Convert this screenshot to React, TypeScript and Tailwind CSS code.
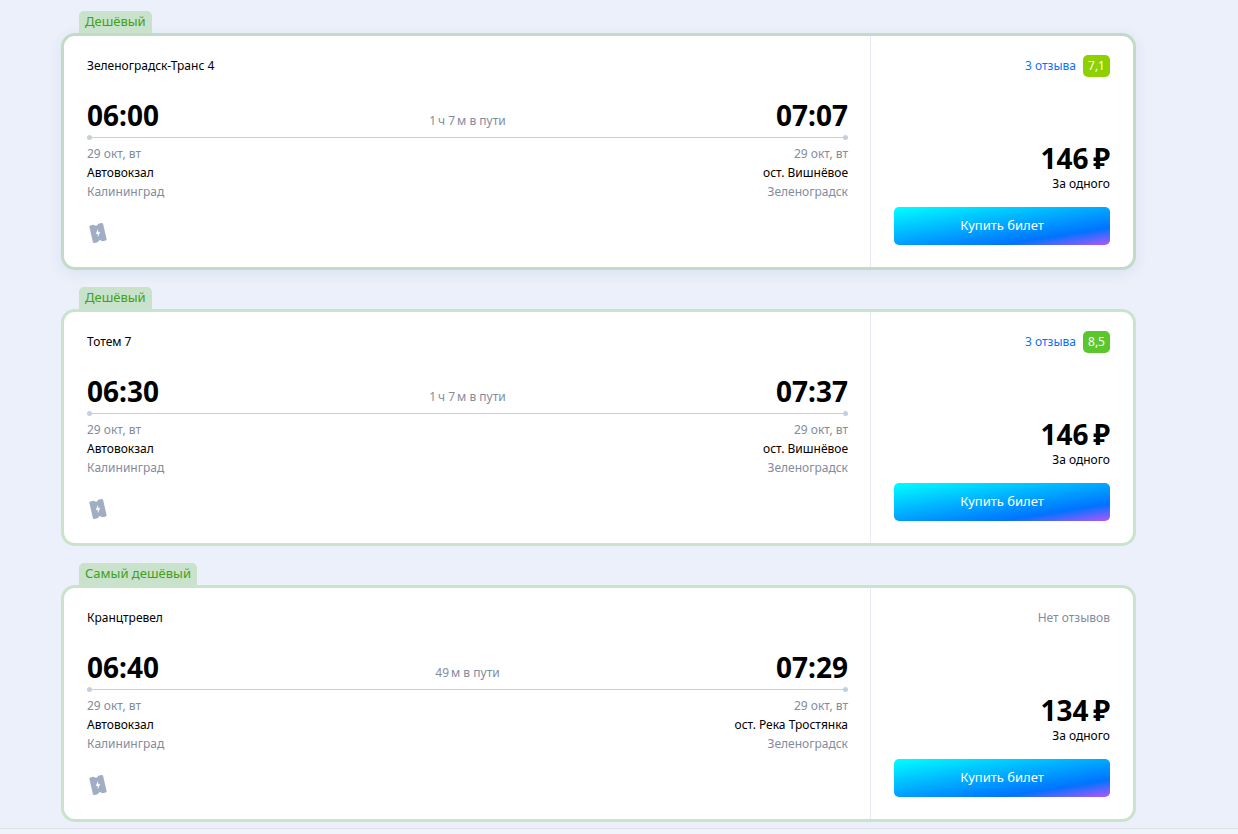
import clsx from "clsx";

type Stop = {
  time: string;
  date: string;
  name: string;
  city: string;
};

type Trip = {
  id: number;
  badge: string;
  carrier: string;
  duration: string;
  from: Stop;
  to: Stop;
  reviews?: string;
  rating?: string;
  ratingClass?: string;
  price: string;
  active?: boolean;
};

const DATE = "29 окт, вт";

const TRIPS: Trip[] = [
  {
    id: 1,
    badge: "Дешёвый",
    carrier: "Зеленоградск-Транс 4",
    duration: "1\u2009ч 7\u2009м в пути",
    from: { time: "06:00", date: DATE, name: "Автовокзал", city: "Калининград" },
    to: { time: "07:07", date: DATE, name: "ост. Вишнёвое", city: "Зеленоградск" },
    reviews: "3 отзыва",
    rating: "7,1",
    ratingClass: "bg-[#8fd000]",
    price: "146",
    active: true,
  },
  {
    id: 2,
    badge: "Дешёвый",
    carrier: "Тотем 7",
    duration: "1\u2009ч 7\u2009м в пути",
    from: { time: "06:30", date: DATE, name: "Автовокзал", city: "Калининград" },
    to: { time: "07:37", date: DATE, name: "ост. Вишнёвое", city: "Зеленоградск" },
    reviews: "3 отзыва",
    rating: "8,5",
    ratingClass: "bg-[#5cc72d]",
    price: "146",
  },
  {
    id: 3,
    badge: "Самый дешёвый",
    carrier: "Кранцтревел",
    duration: "49\u2009м в пути",
    from: { time: "06:40", date: DATE, name: "Автовокзал", city: "Калининград" },
    to: { time: "07:29", date: DATE, name: "ост. Река Тростянка", city: "Зеленоградск" },
    price: "134",
  },
];

function TicketIcon() {
  return (
    <svg width="22" height="22" viewBox="0 0 22 22" role="img" aria-label="Электронный билет">
      <g transform="rotate(-13 11 11)">
        <path
          fill="#a0adc3"
          d="M5.2 2h3.300c.5 0 .8.3.9.700.2.500.8.800 1.600.800s1.400-.3 1.600-.8c.1-.4.400-.7.900-.7h3.300c.8 0 1.200.500 1.200 1.200v15.600c0 .7-.4 1.200-1.200 1.200h-3.300c-.5 0-.8-.3-.9-.7-.2-.5-.8-.8-1.600-.8s-1.400.3-1.600.8c-.1.400-.4.700-.9.700H5.200c-.8 0-1.200-.5-1.200-1.200V3.200C4 2.500 4.400 2 5.200 2z"
        />
        <path fill="#fff" d="M12 6.800 8.600 11.600h1.900l-.6 3.600 3.500-4.900h-2z" />
      </g>
    </svg>
  );
}

function StopInfo({ stop, right }: { stop: Stop; right?: boolean }) {
  return (
    <div className={clsx("text-xs leading-[19px] text-[#838c9e]", right && "text-right")}>
      <p>{stop.date}</p>
      <p className="text-black">{stop.name}</p>
      <p>{stop.city}</p>
    </div>
  );
}

function TripCard({ trip }: { trip: Trip }) {
  return (
    <article>
      <div className="ml-[18px] flex">
        <span className="h-[22px] rounded-t-[5px] bg-[#c9e2cb] px-1.5 text-[13px] leading-5 text-[#42a01c]">
          {trip.badge}
        </span>
      </div>
      <div
        className={clsx(
          "flex rounded-[14px] border-[3px] bg-white",
          trip.active ? "border-[#c1dbc8] shadow-[0_3px_14px_rgba(60,90,160,0.09)]" : "border-[#cae3cc]"
        )}
      >
        <div className="min-w-0 flex-1 pt-5 pr-[22px] pb-[23px] pl-[23px]">
          <h2 className="text-xs leading-5">{trip.carrier}</h2>
          <div className="mt-[23px] flex items-end justify-between">
            <time className="text-[28px] leading-8 font-bold">{trip.from.time}</time>
            <span className="text-xs leading-5 text-[#838c9e]">{trip.duration}</span>
            <time className="text-[28px] leading-8 font-bold">{trip.to.time}</time>
          </div>
          <div className="mt-1 flex items-center">
            <span className="size-[5px] rounded-full bg-[#c4d0e0]" />
            <span className="h-px flex-1 bg-[#c4d0e0]" />
            <span className="size-[5px] rounded-full bg-[#c4d0e0]" />
          </div>
          <div className="mt-1 flex justify-between">
            <StopInfo stop={trip.from} />
            <StopInfo stop={trip.to} right />
          </div>
          <div className="mt-[21px] flex">
            <TicketIcon />
          </div>
        </div>

        <div className="flex w-[263px] flex-col border-l border-[#e6ebf5] px-[23px] pt-[19px] pb-[22px]">
          <div className="flex h-[22px] items-center justify-end gap-[7px] text-xs">
            {trip.rating ? (
              <>
                <a href="#reviews" className="text-[#0a72f5]">
                  {trip.reviews}
                </a>
                <span className={clsx("w-[27px] rounded-[5px] text-center leading-[22px] text-white", trip.ratingClass)}>
                  {trip.rating}
                </span>
              </>
            ) : (
              <span className="text-[#838c9e]">Нет отзывов</span>
            )}
          </div>
          <p className="mt-auto text-right text-[28px] leading-8 font-bold">{trip.price}&#8201;₽</p>
          <p className="text-right text-xs leading-5">За одного</p>
          <button
            type="button"
            className="mt-[13px] h-[38px] w-full cursor-pointer rounded-[5px] bg-[linear-gradient(171deg,#00ffff_0%,#0073ff_76%,#b357ff_100%)] text-[13px] text-white"
          >
            Купить билет
          </button>
        </div>
      </div>
    </article>
  );
}

export default function App() {
  return (
    <div className="flex min-h-screen flex-col bg-[#ebf0fa] font-['Noto_Sans',sans-serif] text-black">
      <main className="flex flex-col gap-[17px] pt-[11px] pr-[102px] pb-1.5 pl-[61px]">
        {TRIPS.map((trip) => (
          <TripCard key={trip.id} trip={trip} />
        ))}
      </main>
      <footer className="flex-1 border-t border-[#dfe1e8] bg-[#f0f3f9]" />
    </div>
  );
}
